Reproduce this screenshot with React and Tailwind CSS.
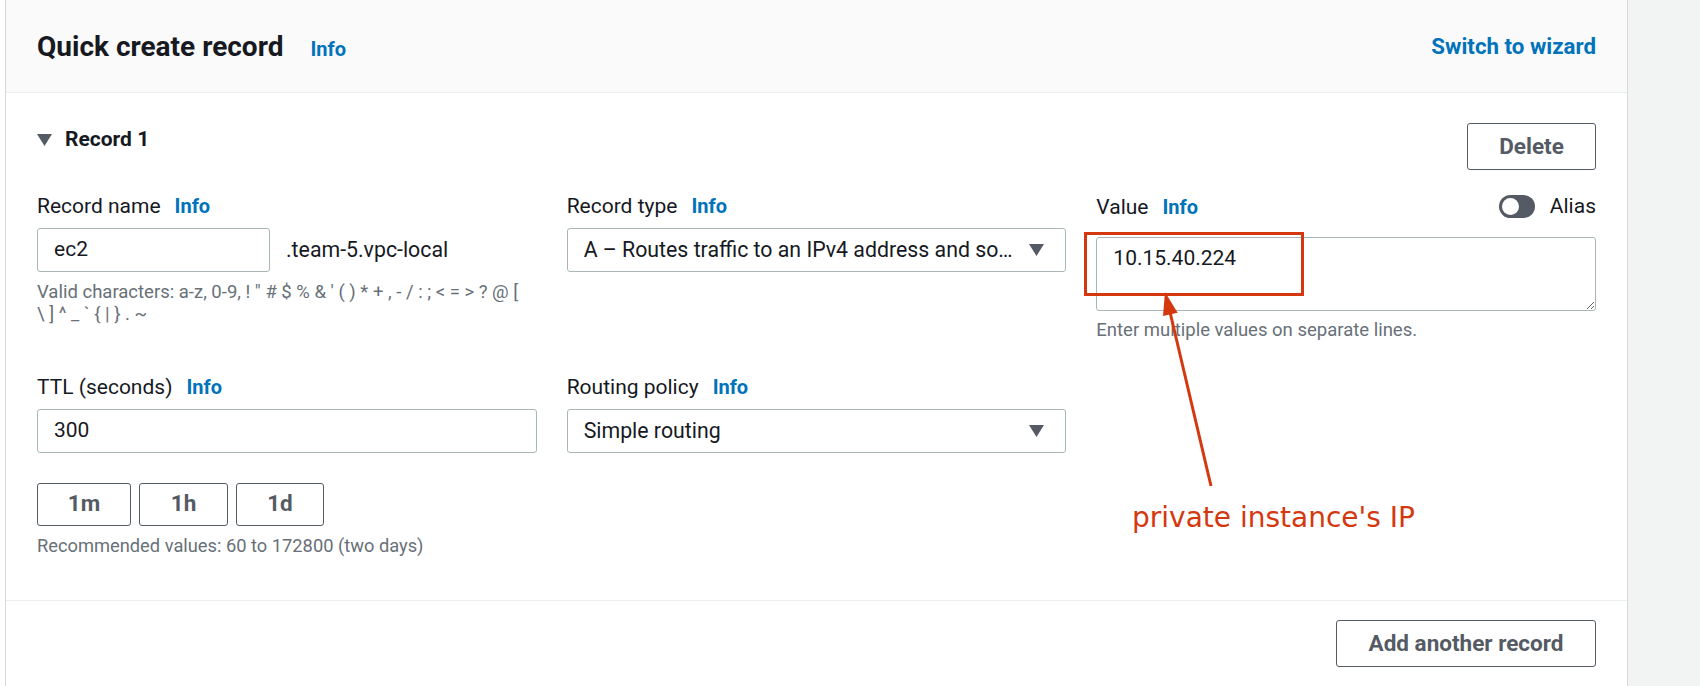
import React from "react";

function Info() {
  return <span className="text-[20px] font-bold text-[#0073bb]">Info</span>;
}

function Label({ children }) {
  return (
    <div className="flex items-center h-[30px] gap-[14px] text-[21px] leading-[30px] text-[#16191f]">
      <span>{children}</span>
      <Info />
    </div>
  );
}

function Caret() {
  return (
    <svg width="15" height="12" viewBox="0 0 15 12" className="shrink-0">
      <polygon points="0,0 15,0 7.5,12" fill="#545b64" />
    </svg>
  );
}

function Select({ text }) {
  return (
    <div className="mt-[7px] h-[44px] flex items-center justify-between border border-[#aab7b8] rounded-[3px] pl-[16px] pr-[21px] bg-white">
      <span className="whitespace-nowrap overflow-hidden text-[21.3px] text-[#16191f]">{text}</span>
      <Caret />
    </div>
  );
}

function Btn({ children, className }) {
  return (
    <div
      className={
        "flex items-center justify-center border border-[#545b64] rounded-[3px] text-[22.5px] font-bold text-[#545b64] bg-white " +
        className
      }
    >
      {children}
    </div>
  );
}

export default function App() {
  return (
    <div
      className="relative flex w-[1700px] h-[686px] bg-white overflow-hidden"
      style={{ fontFamily: "Roboto, 'Liberation Sans', sans-serif" }}
    >
      <div className="w-[5px] shrink-0" />
      <div className="w-[1623px] shrink-0 border-l border-r border-[#d5dbdb] flex flex-col">
        {/* header */}
        <div className="h-[93px] shrink-0 bg-[#fafafa] border-b border-[#eaeded] px-[31px] flex items-center justify-between">
          <div className="flex items-center gap-[27px] pt-[2px]">
            <span className="text-[28px] font-bold text-[#16191f]">Quick create record</span>
            <span className="text-[20px] font-bold text-[#0073bb] pt-[4px]">Info</span>
          </div>
          <span className="text-[22.3px] font-bold text-[#0073bb] pt-[2px]">Switch to wizard</span>
        </div>

        {/* body */}
        <div className="h-[508px] shrink-0 border-b border-[#eaeded] px-[31px] pt-[30px]">
          <div className="flex justify-between items-start">
            <div className="flex items-center h-[34px] gap-[13px]">
              <svg width="15" height="12" viewBox="0 0 15 12">
                <polygon points="0,0 15,0 7.5,12" fill="#545b64" />
              </svg>
              <span className="text-[21px] font-bold text-[#16191f]">Record 1</span>
            </div>
            <Btn className="w-[129px] h-[47px]">Delete</Btn>
          </div>

          <div className="grid grid-cols-3 gap-x-[30px] mt-[21px]">
            <div>
              <Label>Record name</Label>
              <div className="mt-[7px] flex items-center gap-[16px]">
                <div className="w-[233px] h-[44px] flex items-center border border-[#aab7b8] rounded-[3px] px-[16px] text-[21px] text-[#16191f]">
                  ec2
                </div>
                <span className="text-[21.3px] text-[#16191f]">.team-5.vpc-local</span>
              </div>
              <div className="mt-[9px] text-[18.5px] leading-[22px] text-[#687078] whitespace-nowrap">
                Valid characters: a-z, 0-9, ! " # $ % &amp; ' ( ) * + , - / : ; &lt; = &gt; ? @ [
                <br />\ ] ^ _ ` {"{"} | {"}"} . ~
              </div>
            </div>
            <div>
              <Label>Record type</Label>
              <Select text="A – Routes traffic to an IPv4 address and so…" />
            </div>
            <div>
              <div className="flex items-center justify-between">
                <Label>Value</Label>
                <div className="flex items-center gap-[15px]">
                  <div className="relative w-[36px] h-[23px] rounded-full bg-[#545b64]">
                    <div className="absolute left-[3px] top-[3px] w-[17px] h-[17px] rounded-full bg-white" />
                  </div>
                  <span className="text-[21px] text-[#16191f]">Alias</span>
                </div>
              </div>
              <textarea
                readOnly
                defaultValue="10.15.40.224"
                className="mt-[14px] block w-full h-[74px] border border-[#aab7b8] rounded-[3px] pl-[16px] py-[5px] text-[21px] leading-[30px] text-[#16191f] outline-none"
              />
              <div className="mt-[8px] text-[18.5px] leading-[22px] text-[#687078]">
                Enter multiple values on separate lines.
              </div>
            </div>
          </div>

          <div className="grid grid-cols-3 gap-x-[30px] mt-[31px]">
            <div>
              <Label>TTL (seconds)</Label>
              <div className="mt-[7px] h-[44px] flex items-center border border-[#aab7b8] rounded-[3px] px-[16px] text-[21px] text-[#16191f]">
                300
              </div>
              <div className="mt-[30px] flex gap-[8px]">
                <Btn className="w-[94px] h-[43px]">1m</Btn>
                <Btn className="w-[89px] h-[43px]">1h</Btn>
                <Btn className="w-[88px] h-[43px]">1d</Btn>
              </div>
              <div className="mt-[9px] text-[18.3px] leading-[22px] text-[#687078]">
                Recommended values: 60 to 172800 (two days)
              </div>
            </div>
            <div>
              <Label>Routing policy</Label>
              <Select text="Simple routing" />
            </div>
            <div />
          </div>
        </div>

        {/* footer */}
        <div className="flex justify-end px-[31px] pt-[19px]">
          <Btn className="w-[260px] h-[47px]">Add another record</Btn>
        </div>
      </div>
      <div className="flex-1 bg-[#f2f3f3]" />

      {/* annotations */}
      <svg className="absolute left-0 top-0 pointer-events-none" width="1700" height="686">
        <rect x="1085.5" y="233.5" width="217" height="61" fill="none" stroke="#d4380f" strokeWidth="3" />
        <line x1="1211" y1="486" x2="1170" y2="312" stroke="#d4380f" strokeWidth="3" />
        <polygon points="1165,292 1177.6,312.7 1163,316.1" fill="#d4380f" />
      </svg>
      <div
        className="absolute left-[1132px] top-[504px] text-[28px] leading-[28px] text-[#d4380f] whitespace-nowrap"
        style={{ fontFamily: "'DejaVu Sans', sans-serif" }}
      >
        private instance's IP
      </div>
    </div>
  );
}
